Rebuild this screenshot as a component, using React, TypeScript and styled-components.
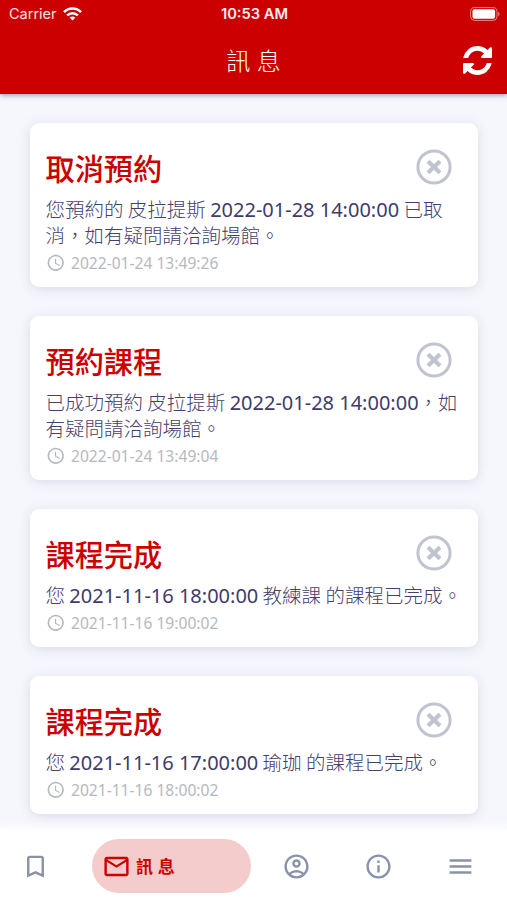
import React from "react";
import styled, { createGlobalStyle } from "styled-components";
import {
  MdAccessTime,
  MdBookmarkBorder,
  MdMailOutline,
  MdMenu,
  MdOutlineAccountCircle,
  MdOutlineInfo,
} from "react-icons/md";

const GlobalStyle = createGlobalStyle`
  * { box-sizing: border-box; }
  html, body { margin: 0; padding: 0; overflow: hidden; }
  body { font-family: "Noto Sans", "Noto Sans CJK TC", sans-serif; background: #f6f7fd; }
`;

const Screen = styled.div`
  width: 507px;
  height: 900px;
  display: flex;
  flex-direction: column;
  overflow: hidden;
  background: #f6f7fd;
`;

const Header = styled.header`
  flex: none;
  height: 94px;
  background: #cc0000;
  color: #fff;
  box-shadow: 0 1px 5px rgba(40, 50, 70, 0.5);
  z-index: 1;
`;

const StatusBar = styled.div`
  height: 27px;
  display: grid;
  grid-template-columns: 1fr auto 1fr;
  align-items: center;
  padding: 0 7px 0 9px;
  font-family: Inter, sans-serif;
`;

const Carrier = styled.div`
  display: flex;
  align-items: center;
  gap: 6px;
  font-size: 14.5px;
  color: #ffe3e3;
`;

const Clock = styled.div`
  font-size: 14.7px;
  font-weight: 600;
  color: #ffeded;
`;

const BatterySlot = styled.div`
  display: flex;
  justify-content: flex-end;
`;

const TitleBar = styled.div`
  height: 66px;
  display: grid;
  grid-template-columns: 1fr auto 1fr;
  align-items: center;
  padding: 0 15px 0 0;
`;

const PageTitle = styled.h1`
  grid-column: 2;
  margin: 0 0 0 15px;
  font: 300 24px/34px "Noto Sans CJK TC", sans-serif;
  word-spacing: 1px;
`;

const RefreshButton = styled.button`
  justify-self: end;
  display: flex;
  padding: 0;
  border: 0;
  background: none;
  color: #fff;
`;

const List = styled.main`
  flex: 1;
  min-height: 0;
  display: flex;
  flex-direction: column;
  gap: 29px;
  padding: 29px 29px 0 30px;
`;

const Card = styled.article`
  flex: none;
  padding: 24px 15.5px 10px;
  border-radius: 9px;
  background: #fff;
  box-shadow: 0 2px 12px rgba(70, 75, 125, 0.17);
`;

const CardHead = styled.div`
  height: 49px;
  display: flex;
  justify-content: space-between;
  align-items: flex-start;
  padding-right: 11px;
`;

const CardTitle = styled.h2`
  margin: 0;
  font: 500 29.2px/41px "Noto Sans CJK TC", sans-serif;
  color: #cc0000;
`;

const CloseButton = styled.button`
  display: flex;
  margin-top: 2px;
  padding: 0;
  border: 0;
  background: none;
`;

const Message = styled.p`
  margin: 0;
  font: 300 19.5px/26px "Noto Sans CJK TC", sans-serif;
  color: #44406c;
  white-space: nowrap;
`;

const Line = styled.span`
  display: block;
  height: 26px;
`;

const Stamp = styled.span`
  font: 400 20px/25px "Noto Sans", sans-serif;
  color: #403b6b;
`;

const Meta = styled.div`
  display: flex;
  align-items: center;
  gap: 6px;
  height: 29px;
  padding-top: 1px;
  font: 400 15.6px/27px "Noto Sans", sans-serif;
  color: #b5b9be;
`;

const TabBar = styled.nav`
  flex: none;
  height: 70px;
  display: flex;
  align-items: center;
  background: #fff;
  box-shadow: 0 0 8px 3px #fff;
  z-index: 1;
  padding: 5px 0 3px;
`;

const Tab = styled.a<{ $w: number }>`
  width: ${(p) => p.$w}px;
  display: flex;
  justify-content: center;
  color: #8893a9;
`;

const ActiveTab = styled.a`
  display: flex;
  align-items: center;
  gap: 5px;
  width: 159px;
  height: 54px;
  margin: 0 4px 0 22px;
  padding-left: 10px;
  border-radius: 27px;
  background: #f5cccc;
  color: #cc0000;
  font: 700 17px/24px "Noto Sans CJK TC", sans-serif;
  word-spacing: 1px;
`;

function WifiIcon() {
  return (
    <svg width="19" height="14" viewBox="0 0 19 14" fill="none" stroke="#fff" strokeWidth="2.5">
      <path d="M1 5.2C5.8.3 13.2.3 18 5.2" />
      <path d="M4.1 8.4c3.1-3 7.7-3 10.8 0" />
      <path d="M9.5 13.6 6.6 10.6c1.7-1.5 4.1-1.5 5.8 0z" fill="#fff" stroke="none" />
    </svg>
  );
}

function BatteryIcon() {
  return (
    <svg width="30" height="14" viewBox="0 0 30 14">
      <rect x=".6" y=".6" width="26.4" height="12.8" rx="4" fill="none" stroke="#ea8a8a" strokeWidth="1" />
      <rect x="2.5" y="2.3" width="22.6" height="9.4" rx="2" fill="#fff" />
      <path d="M28.2 5v4q1.4-.6 1.4-2t-1.4-2z" fill="#ea8a8a" />
    </svg>
  );
}

function RefreshIcon() {
  return (
    <svg width="29" height="29" viewBox="0 0 1536 1536" fill="currentColor">
      <path d="M1511 928q0 5-1 7-64 268-268 434.500T764 1536q-146 0-282.500-55T238 1324l-129 129q-19 19-45 19t-45-19-19-45V960q0-26 19-45t45-19h448q26 0 45 19t19 45-19 45l-137 137q71 66 161 102t187 36q134 0 250-65t186-179q11-17 53-117 8-23 30-23h192q13 0 22.500 9.500t9.500 22.500zm25-800v448q0 26-19 45t-45 19h-448q-26 0-45-19t-19-45 19-45l138-138Q969 256 768 256q-134 0-250 65T332 500q-11 17-53 117-8 23-30 23H50q-13 0-22.500-9.500T18 608v-7q65-268 270-434.500T768 0q146 0 284 55.500T1297 212l130-129q19-19 45-19t45 19 19 45z" />
    </svg>
  );
}

function CloseIcon() {
  return (
    <svg width="36" height="36" viewBox="0 0 36 36" fill="none" stroke="#bfc4ce">
      <circle cx="18" cy="18" r="16.1" strokeWidth="3" />
      <path d="m12 12.200 12 11.600M24 12.200 12 23.800" strokeWidth="4.200" />
    </svg>
  );
}

const notices = [
  {
    title: "取消預約",
    lines: [["您預約的 皮拉提斯 ", "2022-01-28 14:00:00", " 已取"], ["消，如有疑問請洽詢場館。"]],
    time: "2022-01-24 13:49:26",
  },
  {
    title: "預約課程",
    lines: [["已成功預約 皮拉提斯 ", "2022-01-28 14:00:00", "，如"], ["有疑問請洽詢場館。"]],
    time: "2022-01-24 13:49:04",
  },
  {
    title: "課程完成",
    lines: [["您 ", "2021-11-16 18:00:00", " 教練課 的課程已完成。"]],
    time: "2021-11-16 19:00:02",
  },
  {
    title: "課程完成",
    lines: [["您 ", "2021-11-16 17:00:00", " 瑜珈 的課程已完成。"]],
    time: "2021-11-16 18:00:02",
  },
];

export default function App() {
  return (
    <>
      <GlobalStyle />
      <Screen>
        <Header>
          <StatusBar>
            <Carrier>
              Carrier <WifiIcon />
            </Carrier>
            <Clock>10:53 AM</Clock>
            <BatterySlot>
              <BatteryIcon />
            </BatterySlot>
          </StatusBar>
          <TitleBar>
            <PageTitle>訊 息</PageTitle>
            <RefreshButton aria-label="重新整理">
              <RefreshIcon />
            </RefreshButton>
          </TitleBar>
        </Header>
        <List>
          {notices.map((n) => (
            <Card key={n.time}>
              <CardHead>
                <CardTitle>{n.title}</CardTitle>
                <CloseButton aria-label="刪除">
                  <CloseIcon />
                </CloseButton>
              </CardHead>
              <Message>
                {n.lines.map(([before, stamp, after]) => (
                  <Line key={before}>
                    {before}
                    {stamp && <Stamp>{stamp}</Stamp>}
                    {after}
                  </Line>
                ))}
              </Message>
              <Meta>
                <MdAccessTime size={19.5} />
                {n.time}
              </Meta>
            </Card>
          ))}
        </List>
        <TabBar>
          <Tab $w={70}>
            <MdBookmarkBorder size={29} />
          </Tab>
          <ActiveTab>
            <MdMailOutline size={29} />
            訊 息
          </ActiveTab>
          <Tab $w={82}>
            <MdOutlineAccountCircle size={29} />
          </Tab>
          <Tab $w={82}>
            <MdOutlineInfo size={29} />
          </Tab>
          <Tab $w={82}>
            <MdMenu size={29} />
          </Tab>
        </TabBar>
      </Screen>
    </>
  );
}
